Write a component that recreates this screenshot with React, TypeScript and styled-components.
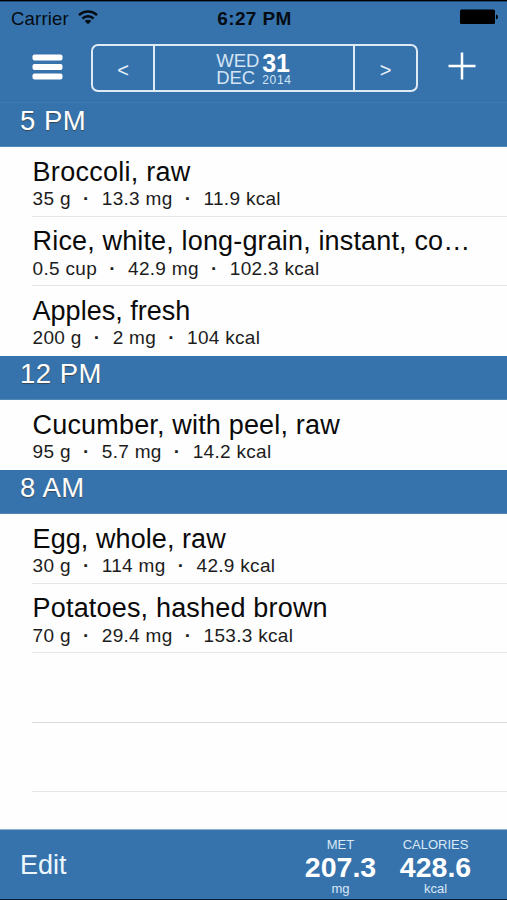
import React from "react";
import styled, { createGlobalStyle } from "styled-components";

const BLUE = "#3673ad";

const GlobalStyle = createGlobalStyle`
  html, body { margin: 0; padding: 0; background: #fff; }
  *, *::before, *::after { box-sizing: border-box; }
  button { appearance: none; background: none; border: 0; padding: 0; margin: 0; color: inherit; font: inherit; }
`;

const Screen = styled.main`
  width: 507px;
  height: 900px;
  display: flex;
  flex-direction: column;
  overflow: hidden;
  background: #fefefe;
  color: #0a0a0a;
  border-top: 1px solid #000;
  border-bottom: 1px solid #0b1a30;
  font-family: "Liberation Sans", Arial, sans-serif;
  white-space: nowrap;
`;

const StatusBar = styled.div`
  flex: none;
  height: 35px;
  background: ${BLUE};
  border-top: 1px solid #1f4a72;
  display: grid;
  grid-template-columns: 1fr auto 1fr;
  padding: 6px 9px 0 11px;
  font-size: 18.5px;
  line-height: 21px;
  color: #050b12;
`;

const Carrier = styled.div`
  display: flex;
  gap: 9px;
  letter-spacing: 0.2px;
  svg { margin-top: 1px; }
`;

const Clock = styled.div`
  font-weight: bold;
  font-size: 19px;
  letter-spacing: 0.35px;
`;

const BatterySlot = styled.div`
  display: flex;
  justify-content: flex-end;
  padding-top: 1px;
`;

const NavBar = styled.header`
  flex: none;
  height: 67px;
  background: ${BLUE};
  border-bottom: 1px solid #3e79b0;
  color: #fff;
  display: flex;
  align-items: flex-start;
  padding: 8px 0 0 32px;
`;

const MenuButton = styled.button`
  width: 31px;
  height: 27px;
  margin: 9px 28px 0 0;
  svg { display: block; }
`;

const DateSwitcher = styled.div`
  width: 327px;
  height: 48px;
  border: 2px solid #dfeaf5;
  border-radius: 7px;
  display: grid;
  grid-template-columns: 60px 1fr 61px;
  grid-template-rows: 44px;
`;

const StepButton = styled.button`
  font-size: 20px;
  line-height: 24px;
  padding-top: 3px;
  color: #e8f1fa;
`;

const DateButton = styled.button`
  border: solid #dfeaf5;
  border-width: 0 2px;
  display: flex;
  justify-content: center;
  gap: 3px;
  padding: 6px 0 0 0;
  color: #d3e4f4;
  text-align: left;
`;

const DayColumn = styled.span`
  display: flex;
  flex-direction: column;
  font-size: 18.5px;
  line-height: 17px;
  letter-spacing: -0.1px;
`;

const NumberColumn = styled.span`
  display: flex;
  flex-direction: column;
`;

const DayNumber = styled.strong`
  font-size: 25px;
  line-height: 22px;
  color: #fff;
`;

const Year = styled.span`
  font-size: 12px;
  line-height: 12px;
  letter-spacing: 0.7px;
`;

const AddButton = styled.button`
  width: 28px;
  height: 28px;
  margin: 8px 0 0 30px;
  svg { display: block; }
`;

const Log = styled.div`
  flex: 1;
  min-height: 0;
  overflow: hidden;
`;

const SectionHeader = styled.h2<{ $first?: boolean }>`
  margin: 0;
  height: ${(p) => (p.$first ? 44 : 44.5)}px;
  padding: ${(p) => (p.$first ? 2.5 : 3)}px 0 0 20px;
  background: ${BLUE};
  border-bottom: 1px solid #5287ba;
  color: #fff;
  font-size: 27.5px;
  font-weight: normal;
  line-height: 30px;
  letter-spacing: 0.5px;
  text-shadow: 0 1px 1px rgba(60, 50, 40, 0.7);
`;

const Row = styled.div<{ $line?: string }>`
  height: 69.5px;
  margin-left: 32px;
  padding: 10.5px 0 0 0.6px;
  border-bottom: 1px solid ${(p) => p.$line ?? "#e6e6e6"};
`;

const FoodName = styled.div<{ $track: number }>`
  font-size: 27px;
  line-height: 29.5px;
  letter-spacing: ${(p) => p.$track}px;
`;

const Facts = styled.div`
  display: flex;
  font-size: 19px;
  line-height: 23.5px;
  letter-spacing: 0.3px;
  color: #1c1c1c;
`;

const Dot = styled.span`
  width: 31px;
  text-align: center;
  font-weight: bold;
`;

const Footer = styled.footer`
  flex: none;
  height: 70px;
  background: ${BLUE};
  border-top: 1px solid #8fb2d4;
  color: #fff;
  display: flex;
  padding-right: 35.5px;
`;

const EditButton = styled.button`
  font-size: 27px;
  line-height: 30px;
  margin: 20px auto 0 20px;
  align-self: flex-start;
  color: #eef6fd;
`;

const Total = styled.div`
  width: 72px;
  margin-left: 23px;
  padding-top: 7px;
  display: flex;
  flex-direction: column;
  align-items: center;
  color: #d9e8f6;
  font-size: 13px;
  line-height: 15px;
`;

const TotalValue = styled.strong`
  font-size: 28.5px;
  line-height: 31px;
  color: #fff;
`;

const TotalUnit = styled.span`
  line-height: 12px;
`;

type Food = { name: string; facts: string[]; track: number };

const sections: { time: string; foods: Food[] }[] = [
  {
    time: "5 PM",
    foods: [
      { name: "Broccoli, raw", facts: ["35 g", "13.3 mg", "11.9 kcal"], track: 0.27 },
      { name: "Rice, white, long-grain, instant, co…", facts: ["0.5 cup", "42.9 mg", "102.3 kcal"], track: 0.15 },
      { name: "Apples, fresh", facts: ["200 g", "2 mg", "104 kcal"], track: 0 },
    ],
  },
  {
    time: "12 PM",
    foods: [{ name: "Cucumber, with peel, raw", facts: ["95 g", "5.7 mg", "14.2 kcal"], track: 0.17 }],
  },
  {
    time: "8 AM",
    foods: [
      { name: "Egg, whole, raw", facts: ["30 g", "114 mg", "42.9 kcal"], track: 0.07 },
      { name: "Potatoes, hashed brown", facts: ["70 g", "29.4 mg", "153.3 kcal"], track: 0.18 },
    ],
  },
];

const WifiIcon = () => (
  <svg width="20" height="16" viewBox="0 0 20 16">
    <g fill="none" stroke="#050b12" strokeWidth="2.5">
      <path d="M1 6.2 A12.6 12.6 0 0 1 19 6.2" />
      <path d="M4.4 9.7 A7.8 7.8 0 0 1 15.6 9.7" />
    </g>
    <path d="M6.7 12 A4.7 4.7 0 0 1 13.3 12 L10 15.3 Z" fill="#050b12" />
  </svg>
);

const BatteryIcon = () => (
  <svg width="38" height="16" viewBox="0 0 38 16">
    <rect x="0" y="0.5" width="35" height="14.5" rx="1.5" fill="#000" />
    <path d="M36 5.5 Q38 6 38 7.9 Q38 9.8 36 10.5 Z" fill="#000" />
  </svg>
);

const MenuIcon = () => (
  <svg width="31" height="27" viewBox="0 0 31 27" fill="#fff">
    <rect x="0.5" y="1.5" width="30" height="6" rx="2" />
    <rect x="0.5" y="11" width="30" height="6" rx="2" />
    <rect x="0.5" y="20.5" width="30" height="6" rx="2" />
  </svg>
);

const PlusIcon = () => (
  <svg width="28" height="28" viewBox="0 0 28 28" stroke="#fff" strokeWidth="2.5">
    <path d="M0.5 14H27.5M14 0.5V27.5" />
  </svg>
);

export default function App() {
  return (
    <>
      <GlobalStyle />
      <Screen>
        <StatusBar>
          <Carrier>
            Carrier
            <WifiIcon />
          </Carrier>
          <Clock>6:27 PM</Clock>
          <BatterySlot>
            <BatteryIcon />
          </BatterySlot>
        </StatusBar>
        <NavBar>
          <MenuButton aria-label="Menu">
            <MenuIcon />
          </MenuButton>
          <DateSwitcher>
            <StepButton>&lt;</StepButton>
            <DateButton>
              <DayColumn>
                <span>WED</span>
                <span>DEC</span>
              </DayColumn>
              <NumberColumn>
                <DayNumber>31</DayNumber>
                <Year>2014</Year>
              </NumberColumn>
            </DateButton>
            <StepButton>&gt;</StepButton>
          </DateSwitcher>
          <AddButton aria-label="Add">
            <PlusIcon />
          </AddButton>
        </NavBar>
        <Log>
          {sections.map((section, i) => (
            <section key={section.time}>
              <SectionHeader $first={i === 0}>{section.time}</SectionHeader>
              {section.foods.map((food, j) => (
                <Row
                  key={food.name}
                  $line={i < 2 && j === section.foods.length - 1 ? "transparent" : undefined}
                >
                  <FoodName $track={food.track}>{food.name}</FoodName>
                  <Facts>
                    {food.facts.map((fact, k) => (
                      <React.Fragment key={fact}>
                        {k > 0 && <Dot>·</Dot>}
                        <span>{fact}</span>
                      </React.Fragment>
                    ))}
                  </Facts>
                </Row>
              ))}
            </section>
          ))}
          <Row $line="#dadada" />
          <Row />
        </Log>
        <Footer>
          <EditButton>Edit</EditButton>
          <Total>
            <span>MET</span>
            <TotalValue>207.3</TotalValue>
            <TotalUnit>mg</TotalUnit>
          </Total>
          <Total>
            <span>CALORIES</span>
            <TotalValue>428.6</TotalValue>
            <TotalUnit>kcal</TotalUnit>
          </Total>
        </Footer>
      </Screen>
    </>
  );
}
